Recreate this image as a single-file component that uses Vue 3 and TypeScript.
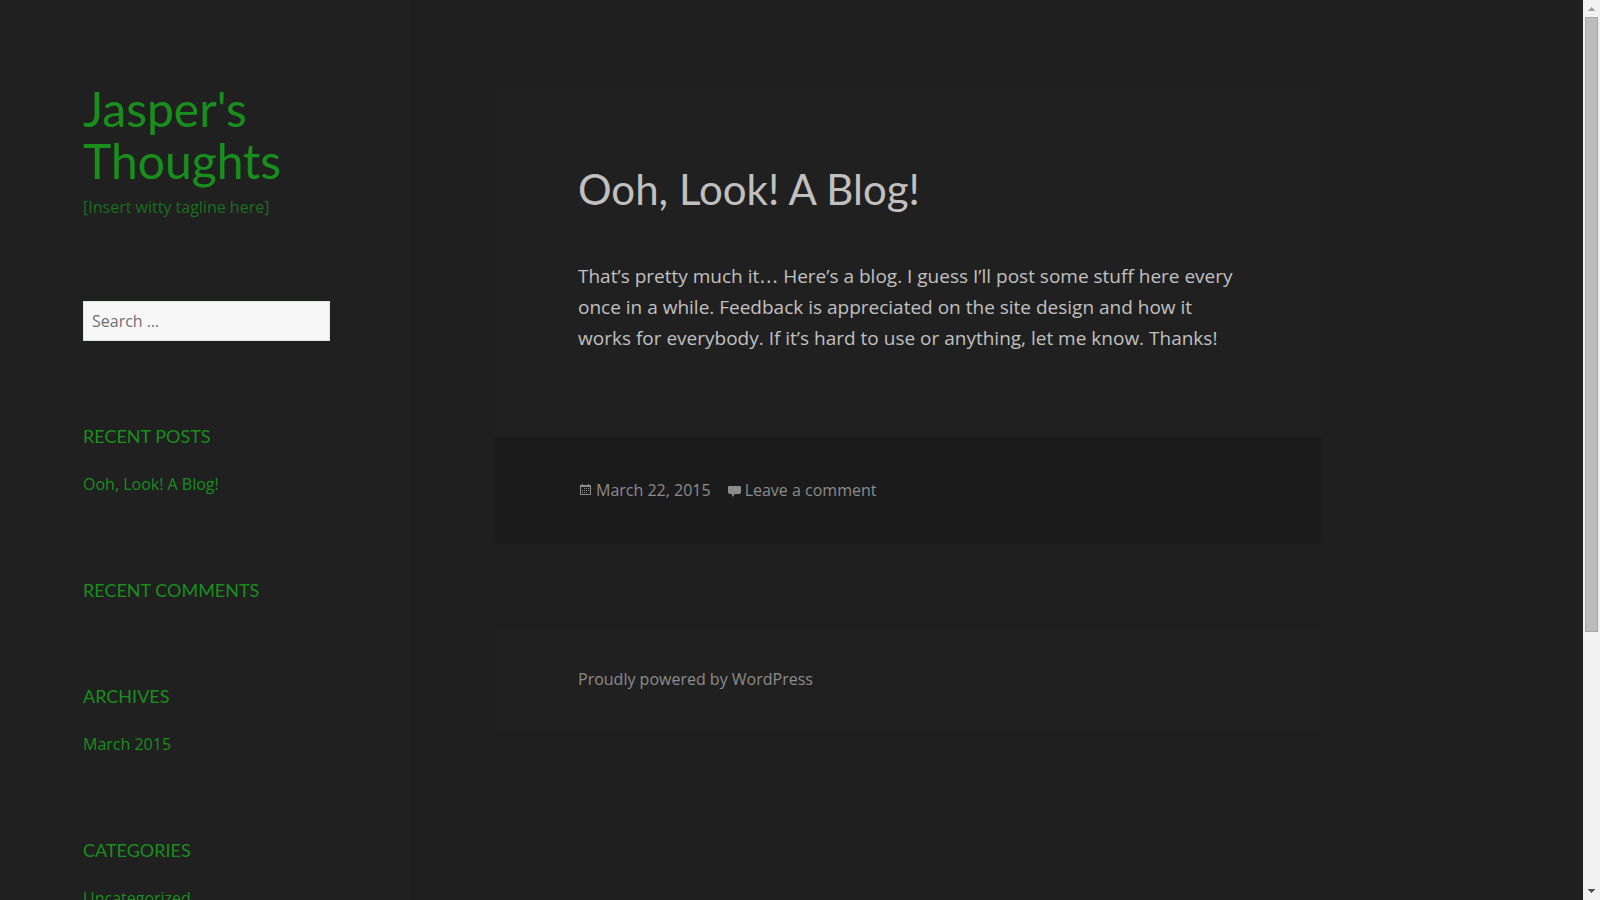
<script setup lang="ts">
interface Widget {
  title: string
  items: string[]
}

const widgets: Widget[] = [
  { title: 'Recent Posts', items: ['Ooh, Look! A Blog!'] },
  { title: 'Recent Comments', items: [] },
  { title: 'Archives', items: ['March 2015'] },
  { title: 'Categories', items: ['Uncategorized'] },
]
</script>

<template>
  <div class="window">
    <div class="viewport">
      <div class="site">
        <div class="sidebar">
          <header class="branding">
            <h1 class="site-title"><a href="#">Jasper's Thoughts</a></h1>
            <p class="tagline">[Insert witty tagline here]</p>
          </header>
          <form class="search" role="search" @submit.prevent>
            <input type="search" aria-label="Search for:" placeholder="Search …" />
          </form>
          <aside v-for="widget in widgets" :key="widget.title" class="widget">
            <h2>{{ widget.title }}</h2>
            <ul v-if="widget.items.length">
              <li v-for="item in widget.items" :key="item"><a href="#">{{ item }}</a></li>
            </ul>
          </aside>
        </div>

        <div class="content">
          <main>
            <article class="card">
              <div class="entry">
                <h2 class="entry-title"><a href="#">Ooh, Look! A Blog!</a></h2>
                <p>
                  That’s pretty much it<span class="ellipsis">…</span> Here’s a blog. I guess I’ll post some stuff here
                  every once in a while. Feedback is appreciated on the site design and how it works for everybody. If
                  it’s hard to use or anything, let me know. Thanks!
                </p>
              </div>
              <footer class="meta">
                <a href="#">
                  <svg width="16" height="16" viewBox="0 0 16 16" shape-rendering="crispEdges" aria-hidden="true">
                    <path
                      d="M2 3h2V2h1v1h5V2h1v1h2v10H2zM3 5v7h9V5z"
                      fill="currentColor"
                      fill-rule="evenodd"
                    />
                    <path
                      d="M6 6h1v1H6zM8 6h1v1H8zM10 6h1v1h-1zM4 8h1v1H4zM6 8h1v1H6zM8 8h1v1H8zM10 8h1v1h-1zM4 10h1v1H4zM6 10h1v1H6zM8 10h1v1H8z"
                      fill="currentColor"
                    />
                  </svg>
                  <time datetime="2015-03-22">March 22, 2015</time>
                </a>
                <a href="#">
                  <svg width="16" height="16" viewBox="0 0 16 16" aria-hidden="true">
                    <path
                      d="M2 4h11q1 0 1 1v5q0 2-2 2H8l-3 3v-3H3q-2 0-2-2V5q0-1 1-1z"
                      fill="currentColor"
                    />
                  </svg>
                  Leave a comment
                </a>
              </footer>
            </article>
          </main>
          <footer class="card credits">
            <a href="#">Proudly powered by WordPress</a>
          </footer>
        </div>
      </div>
    </div>

    <div class="scrollbar" aria-hidden="true">
      <svg class="arrow" width="7" height="4" viewBox="0 0 7 4" shape-rendering="crispEdges">
        <path d="M3 0h1v1h1v1h1v1h1v1H0V3h1V2h1V1h1z" fill="#a3a3a3" />
      </svg>
      <div class="track"><div class="thumb"></div></div>
      <svg class="arrow" width="7" height="4" viewBox="0 0 7 4" shape-rendering="crispEdges">
        <path d="M0 0h7v1H6v1H5v1H4v1H3V3H2V2H1V1H0z" fill="#505050" />
      </svg>
    </div>
  </div>
</template>

<style>
body {
  margin: 0;
  background: #1f1f1f;
}
</style>

<style scoped>
* {
  box-sizing: border-box;
}

.window {
  display: flex;
  height: 100vh;
  overflow: hidden;
  background: #1f1f1f;
  color: #c0c0c0;
  font: 16px/24px 'Open Sans', 'Noto Sans', sans-serif;
}

h1,
h2,
p,
ul {
  margin: 0;
  padding: 0;
  font-weight: 400;
}

ul {
  list-style: none;
}

a {
  color: inherit;
  text-decoration: none;
}

.viewport {
  flex: 1;
  overflow: hidden;
}

.site {
  display: flex;
  max-width: 1403px;
  min-height: 100%;
}

.sidebar {
  flex: 0 0 413px;
  padding: 83px 82px 0 83px;
  background: #202020;
  border-right: 1px solid #1d1d1d;
  color: #188e1d;
}

.site-title {
  font: 400 48px/52px Lato, sans-serif;
}

.tagline {
  margin-top: 8px;
  color: #1c6e1f;
}

.search {
  margin: 82px 0 83px;
}

.search input {
  display: block;
  width: 100%;
  height: 40px;
  margin: 0;
  padding: 0 8px;
  border: 1px solid #dde8dd;
  border-radius: 0;
  background: #f7f7f7;
  color: #707070;
  font: inherit;
  outline: none;
  appearance: none;
}

.search input::placeholder {
  color: #707070;
  opacity: 1;
}

.widget {
  margin-bottom: 82px;
}

.widget h2 {
  font: 400 18px/24px Lato, sans-serif;
  text-transform: uppercase;
}

.widget ul {
  margin-top: 24px;
}

.content {
  flex: 1;
  padding: 83px 82px;
}

.card {
  background: #202020;
  box-shadow: 0 0 1px #181818;
}

.entry {
  padding: 82px 83px 83px;
}

.entry-title {
  margin-bottom: 48px;
  font: 400 42px/48px Lato, sans-serif;
}

.entry p {
  font-size: 19px;
  line-height: 31px;
}

.ellipsis {
  font-family: 'DejaVu Sans', sans-serif;
  line-height: 1;
}

.meta {
  display: flex;
  gap: 16px;
  padding: 41px 83px;
  background: #1b1b1b;
  color: #8c8c8c;
}

.meta a {
  display: flex;
  align-items: center;
  gap: 2px;
}

.credits {
  margin-top: 83px;
  padding: 41px 83px;
  color: #8c8c8c;
}

.scrollbar {
  display: flex;
  flex: 0 0 17px;
  flex-direction: column;
  align-items: center;
  padding: 7px 0;
  background: #f1f1f1;
}

.arrow {
  flex: none;
}

.track {
  flex: 1;
  width: 13px;
  margin: 6px 0;
}

.thumb {
  height: 71%;
  border: 1px solid #a8a8a8;
  background: #bcbcbc;
}
</style>
